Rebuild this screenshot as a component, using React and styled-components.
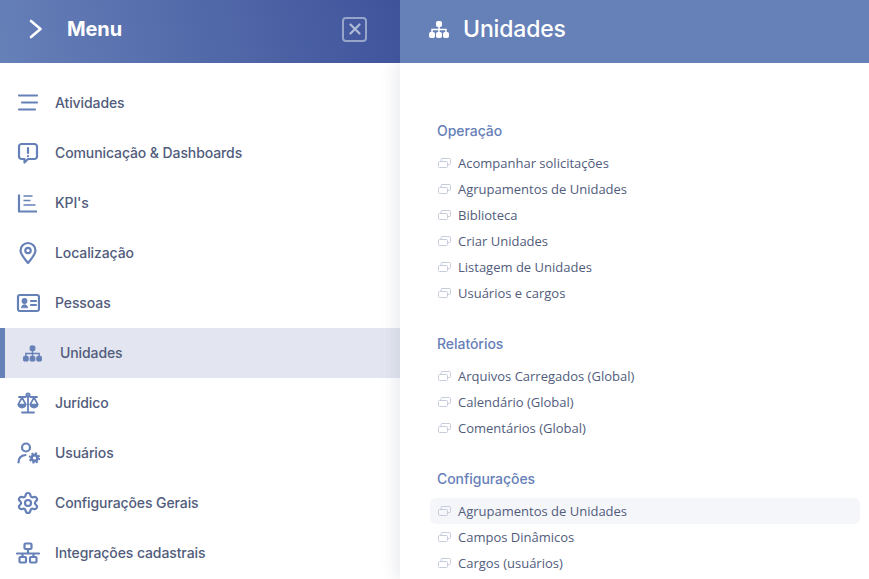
import styled, { createGlobalStyle } from "styled-components";
import { Settings } from "lucide-react";

const GlobalStyle = createGlobalStyle`
  html, body {
    margin: 0;
    padding: 0;
    background: #fff;
    overflow: hidden;
  }
  * {
    box-sizing: border-box;
  }
`;

const Line = ({ children, size = 24 }) => (
  <svg width={size} height={size} viewBox="0 0 24 24" fill="none" stroke="#6680b8" strokeWidth="2.200" strokeLinecap="round" strokeLinejoin="round">
    {children}
  </svg>
);

const SitemapIcon = ({ color, width, height }) => (
  <svg width={width} height={height} viewBox="0 0 20 17" fill={color} stroke={color} strokeWidth="1">
    <rect x="7.500" y="0.500" width="5" height="5" rx="1" />
    <rect x="0.500" y="11.500" width="5" height="5" rx="1" />
    <rect x="7.500" y="11.500" width="5" height="5" rx="1" />
    <rect x="14.500" y="11.500" width="5" height="5" rx="1" />
    <path d="M10 5v7M3 12V8.500h14V12" fill="none" strokeWidth="1.500" />
  </svg>
);

const menuIcons = {
  list: (
    <Line>
      <path d="M3 4.500h18M6 11.500h15M3 18.500h16" />
    </Line>
  ),
  alert: (
    <Line>
      <path d="M5.500 3h13A2.500 2.500 0 0 1 21 5.500v10a2.500 2.500 0 0 1-2.500 2.500H12l-3.500 3.500V18h-3A2.500 2.500 0 0 1 3 15.500v-10A2.500 2.500 0 0 1 5.500 3z" />
      <path d="M12 7v5M12 15v.2" />
    </Line>
  ),
  chart: (
    <Line>
      <path d="M3 3.500V20.500h18" strokeLinecap="butt" />
      <path d="M7.500 5h9M7.500 9.500h7M7.500 14h12" strokeWidth="1.700" strokeLinecap="butt" />
    </Line>
  ),
  pin: (
    <Line>
      <path d="M12 22c-4-5-7.500-8.500-7.500-12.500a7.500 7.500 0 0 1 15 0C19.500 13.500 16 17 12 22z" />
      <circle cx="12" cy="9.500" r="2.700" />
    </Line>
  ),
  card: (
    <Line>
      <rect x="2" y="4" width="21" height="16" rx="2" />
      <circle cx="8.500" cy="10" r="1.800" fill="#6680b8" />
      <path d="M5.500 16.300c.4-3.500 5.600-3.500 6 0z" fill="#6680b8" strokeWidth="1" />
      <path d="M15 10h5M15 14h5" />
    </Line>
  ),
  site: <SitemapIcon color="#6680b8" width={19} height={17} />,
  scale: (
    <Line>
      <path d="M12 4v17M6 21.500h12M3 6h6.500M14.500 6H21" strokeWidth="1.800" />
      <circle cx="12" cy="4" r="1.800" strokeWidth="1.500" />
      <path d="M6 6.500L2.200 13.500h7.600zM18 6.500l-3.800 7h7.600z" strokeWidth="1.600" />
      <path d="M2.200 13.500a3.800 3.300 0 0 0 7.600 0zM14.200 13.500a3.800 3.300 0 0 0 7.600 0z" fill="#6680b8" strokeWidth="1.200" />
    </Line>
  ),
  userCog: (
    <Line>
      <circle cx="10" cy="6.500" r="4" />
      <path d="M2.500 21.500c0-4 2.500-7 7-7.500" />
      <circle cx="18.500" cy="17" r="3" strokeWidth="2.800" />
      <circle cx="18.500" cy="17" r="4.800" strokeWidth="1.800" strokeDasharray="2 1.770" strokeLinecap="butt" />
    </Line>
  ),
  cog: <Settings size={24} color="#6680b8" strokeWidth={2.2} />,
  net: (
    <Line>
      <rect x="8.500" y="2.500" width="7" height="5.500" rx="1" />
      <rect x="3.500" y="16" width="6.500" height="5.500" rx="1" />
      <rect x="14" y="16" width="6.500" height="5.500" rx="1" />
      <path d="M1 12.500h22M12 8v4.500M6.500 12.500V16M17.500 12.500V16" />
    </Line>
  ),
};

const menuItems = [
  { icon: "list", label: "Atividades" },
  { icon: "alert", label: "Comunicação & Dashboards" },
  { icon: "chart", label: "KPI's" },
  { icon: "pin", label: "Localização" },
  { icon: "card", label: "Pessoas" },
  { icon: "site", label: "Unidades", active: true },
  { icon: "scale", label: "Jurídico" },
  { icon: "userCog", label: "Usuários" },
  { icon: "cog", label: "Configurações Gerais" },
  { icon: "net", label: "Integrações cadastrais" },
];

const sections = [
  {
    title: "Operação",
    items: [
      "Acompanhar solicitações",
      "Agrupamentos de Unidades",
      "Biblioteca",
      "Criar Unidades",
      "Listagem de Unidades",
      "Usuários e cargos",
    ],
  },
  {
    title: "Relatórios",
    items: ["Arquivos Carregados (Global)", "Calendário (Global)", "Comentários (Global)"],
  },
  {
    title: "Configurações",
    items: ["Agrupamentos de Unidades", "Campos Dinâmicos", "Cargos (usuários)"],
    hovered: "Agrupamentos de Unidades",
  },
];

const CopyIcon = () => (
  <svg width="13" height="10" viewBox="0 0 13 10" fill="none" stroke="#c6ccdc" strokeWidth="1">
    <rect x="0.500" y="3.500" width="9" height="6" rx="1" />
    <path d="M3 3.500V1.500a1 1 0 0 1 1-1h7.500a1 1 0 0 1 1 1v4a1 1 0 0 1-1 1H9.500" />
  </svg>
);

const App = () => {
  return (
    <Container>
      <GlobalStyle />
      <Sidebar>
        <MenuHeader>
          <svg width="16" height="22" viewBox="0 0 16 22" fill="none" stroke="#fff" strokeWidth="2.600" strokeLinecap="round" strokeLinejoin="round">
            <path d="M3 3l9.500 8L3 19" />
          </svg>
          <MenuTitle>Menu</MenuTitle>
          <CloseButton>
            <svg width="12" height="12" viewBox="0 0 12 12" stroke="#b0bbd6" strokeWidth="2.200" strokeLinecap="round">
              <path d="M1.500 1.500l9 9M10.500 1.500l-9 9" />
            </svg>
          </CloseButton>
        </MenuHeader>
        <MenuList>
          {menuItems.map((item) => (
            <MenuRow key={item.label} $active={item.active}>
              <IconSlot $active={item.active}>{menuIcons[item.icon]}</IconSlot>
              <MenuLabel>{item.label}</MenuLabel>
            </MenuRow>
          ))}
        </MenuList>
      </Sidebar>
      <Panel>
        <PanelHeader>
          <SitemapIcon color="#fff" width={20} height={17} />
          <PanelTitle>Unidades</PanelTitle>
        </PanelHeader>
        <PanelBody>
          {sections.map((section) => (
            <Section key={section.title}>
              <SectionTitle>{section.title}</SectionTitle>
              {section.items.map((label) => (
                <LinkRow key={label} $hovered={section.hovered === label}>
                  <CopyIcon />
                  <span>{label}</span>
                </LinkRow>
              ))}
            </Section>
          ))}
        </PanelBody>
      </Panel>
    </Container>
  );
};

const Container = styled.div`
  display: flex;
  width: 869px;
  height: 579px;
  overflow: hidden;
  background: #fff;
`;
const Sidebar = styled.aside`
  flex: 0 0 400px;
  display: flex;
  flex-direction: column;
`;
const MenuHeader = styled.header`
  position: relative;
  z-index: 1;
  height: 63px;
  display: flex;
  align-items: center;
  padding: 0 33px 5px 28px;
  background: linear-gradient(77deg, #6680b8 0%, #3f539b 100%);
`;
const MenuTitle = styled.h2`
  flex: 1;
  margin: 0 0 0 23px;
  font: 700 20px "Inter", sans-serif;
  letter-spacing: -0.1px;
  color: #fff;
`;
const CloseButton = styled.div`
  width: 25px;
  height: 25px;
  display: flex;
  align-items: center;
  justify-content: center;
  border: 2px solid #97a5ca;
  border-radius: 4px;
`;
const MenuList = styled.nav`
  padding-top: 15px;
`;
const MenuRow = styled.div`
  height: 50px;
  display: flex;
  align-items: center;
  padding-left: ${(p) => (p.$active ? "5px" : "0")};
  background: ${(p) => (p.$active ? "#e3e6f0" : "transparent")};
  box-shadow: ${(p) => (p.$active ? "inset 5px 0 0 #6680b8" : "none")};
`;
const IconSlot = styled.span`
  width: 55px;
  padding-left: ${(p) => (p.$active ? "18px" : "16px")};
  display: flex;
  align-items: center;
`;
const MenuLabel = styled.span`
  padding-bottom: 2px;
  font: 500 14px "Inter", sans-serif;
  letter-spacing: -0.1px;
  color: #515c7c;
`;
const Panel = styled.main`
  flex: 1;
  display: flex;
  flex-direction: column;
`;
const PanelHeader = styled.header`
  position: relative;
  z-index: 1;
  height: 63px;
  display: flex;
  align-items: center;
  gap: 14px;
  padding: 0 0 5px 29px;
  background: #6680b8;
`;
const PanelTitle = styled.h1`
  margin: 0;
  font: 500 23px "Inter", sans-serif;
  letter-spacing: -0.15px;
  color: #fff;
`;
const PanelBody = styled.div`
  flex: 1;
  padding: 55px 9px 0 30px;
  display: flex;
  flex-direction: column;
  gap: 25px;
  box-shadow: -5px 0 14px rgba(60, 70, 110, 0.1);
`;
const Section = styled.section`
  display: flex;
  flex-direction: column;
`;
const SectionTitle = styled.h3`
  height: 26px;
  margin: 0 0 6px;
  padding: 0 0 2px 7px;
  display: flex;
  align-items: center;
  font: 500 14px "Inter", sans-serif;
  letter-spacing: -0.05px;
  color: #6680b8;
`;
const LinkRow = styled.div`
  height: 26px;
  display: flex;
  align-items: center;
  gap: 7px;
  padding-left: 8px;
  border-radius: 6px;
  background: ${(p) => (p.$hovered ? "#f5f6fa" : "transparent")};
  font: 400 13px "Open Sans", sans-serif;
  color: #515c7c;
`;

export default App;
